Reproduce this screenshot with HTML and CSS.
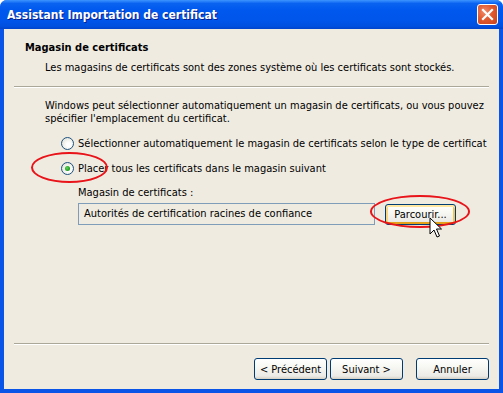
FILE: index.html
```html
<!DOCTYPE html>
<html>
<head>
    <title>Assistant Importation de certificat</title>
    <meta charset="UTF-8">
    <link rel="stylesheet" href="styles.css">
</head>
<body>
    <div class="window">
        <div class="titlebar">
            <span class="title">Assistant Importation de certificat</span>
            <div class="close-btn">
                <svg width="13" height="13" viewBox="0 0 13 13">
                    <path d="M2 2 L11 11 M11 2 L2 11" stroke="#fff" stroke-width="2.2" stroke-linecap="square"/>
                </svg>
            </div>
        </div>

        <div class="frame">
            <div class="header">
                <div class="header-title">Magasin de certificats</div>
                <div class="header-desc">Les magasins de certificats sont des zones système où les certificats sont stockés.</div>
            </div>
            <div class="separator"></div>

            <div class="content">
                <p class="intro">Windows peut sélectionner automatiquement un magasin de certificats, ou vous pouvez<br>spécifier l'emplacement du certificat.</p>

                <div class="options">
                    <label class="radio-row">
                        <span class="radio"></span>
                        <span>Sélectionner automatiquement le magasin de certificats selon le type de certificat</span>
                    </label>
                    <label class="radio-row">
                        <span class="radio checked"></span>
                        <span>Placer tous les certificats dans le magasin suivant</span>
                    </label>
                </div>

                <div class="store">
                    <div class="store-label">Magasin de certificats :</div>
                    <div class="store-row">
                        <div class="textbox">Autorités de certification racines de confiance</div>
                        <button class="btn hover">Parcourir...</button>
                    </div>
                </div>

                <div class="mark mark-radio"></div>
                <div class="mark mark-button"></div>
                <svg class="cursor" width="14" height="22" viewBox="0 0 14 22">
                    <path d="M1 1 L1 17 L5 13 L8 20 L10.5 19 L7.5 12 L12.5 12 Z" fill="#fff" stroke="#000" stroke-width="1"/>
                </svg>
            </div>

            <div class="separator"></div>
            <div class="footer">
                <button class="btn">&lt; Précédent</button>
                <button class="btn">Suivant &gt;</button>
                <button class="btn cancel">Annuler</button>
            </div>
        </div>
    </div>
</body>
</html>
```

FILE: styles.css
```css
body {
    margin: 0;
    background: #ffffff;
    font-family: "DejaVu Sans Condensed", "DejaVu Sans", sans-serif;
    font-stretch: condensed;
    font-size: 11px;
    color: #000;
}
.window {
    width: 503px;
    height: 393px;
    display: flex;
    flex-direction: column;
    background: #0a55e8;
    border-radius: 7px 7px 0 0;
    overflow: hidden;
}
.titlebar {
    height: 29px;
    flex-shrink: 0;
    display: flex;
    align-items: center;
    justify-content: space-between;
    padding: 0 5px 0 7px;
    background: linear-gradient(#3d95ff 0%, #0a63f0 12%, #0058ee 35%, #0055ea 70%, #0050e0 90%, #0044cc 100%);
}
.title {
    color: #fff;
    font-weight: bold;
    font-size: 12px;
    text-shadow: 1px 1px 0 #0a1e8a;
    margin-top: 1px;
}
.close-btn {
    width: 19px;
    height: 19px;
    border: 1px solid #fff;
    border-radius: 3px;
    background: radial-gradient(circle at 35% 35%, #f08c6a 0%, #e05a30 45%, #c8401a 100%);
    display: flex;
    align-items: center;
    justify-content: center;
}
.frame {
    flex: 1;
    display: flex;
    flex-direction: column;
    margin: 0 4px 4px 4px;
    background: #efebe0;
    position: relative;
}
.header {
    height: 57px;
    padding: 12px 0 0 21px;
    box-sizing: border-box;
}
.header-title {
    font-weight: bold;
    line-height: 13px;
}
.header-desc {
    margin: 7px 0 0 20px;
    line-height: 13px;
}
.separator {
    height: 1px;
    margin: 0 10px;
    border-top: 1px solid #aca899;
    background: #fff;
    flex-shrink: 0;
}
.content {
    flex: 1;
    padding: 11px 0 0 41px;
}
.intro {
    margin: 0;
    line-height: 13px;
}
.options {
    margin: 12px 0 0 16px;
    display: flex;
    flex-direction: column;
    gap: 12px;
}
.radio-row {
    display: flex;
    align-items: center;
    gap: 4px;
    line-height: 13px;
}
.radio {
    width: 11px;
    height: 11px;
    border: 1px solid #1c5180;
    border-radius: 50%;
    background: radial-gradient(circle at 60% 60%, #ffffff 20%, #e8e8e0 70%, #d4d0c4 100%);
    display: flex;
    align-items: center;
    justify-content: center;
}
.radio.checked::after {
    content: "";
    width: 5px;
    height: 5px;
    border-radius: 50%;
    background: radial-gradient(circle at 40% 40%, #5fd35f 0%, #21a121 60%, #0e860e 100%);
}
.store {
    margin: 11px 0 0 33px;
}
.store-label {
    line-height: 13px;
}
.store-row {
    display: flex;
    align-items: center;
    margin-top: 3px;
    gap: 10px;
}
.textbox {
    width: 290px;
    height: 20px;
    border: 1px solid #7f9db9;
    padding-left: 5px;
    line-height: 20px;
}
.btn {
    width: 73px;
    height: 23px;
    font-family: inherit;
    font-stretch: condensed;
    font-size: 11px;
    color: #000;
    border: 1px solid #003c74;
    border-radius: 3px;
    background: linear-gradient(#ffffff 0%, #f7f7f3 40%, #ecebe6 85%, #d6d0c5 100%);
    padding: 0;
}
.btn.hover {
    width: 71px;
    height: 21px;
    box-shadow: inset 0 2px 0 #ffe7a2, inset 0 -2px 0 #e5a01a, inset 2px 0 0 #fbd680, inset -2px 0 0 #f5c453;
    margin-top: 2px;
}
.footer {
    height: 44px;
    display: flex;
    justify-content: flex-end;
    align-items: flex-start;
    padding: 13px 10px 0 0;
    box-sizing: border-box;
}
.footer .btn {
    margin-left: 3px;
    height: 22px;
}
.footer .cancel {
    margin-left: 13px;
}
.mark {
    position: absolute;
    border: 2px solid #e8141a;
    border-radius: 50%;
}
.mark-radio {
    left: 27px;
    top: 123px;
    width: 73px;
    height: 27px;
}
.mark-button {
    left: 366px;
    top: 166px;
    width: 96px;
    height: 29px;
}
.cursor {
    position: absolute;
    left: 425px;
    top: 188px;
}
```
